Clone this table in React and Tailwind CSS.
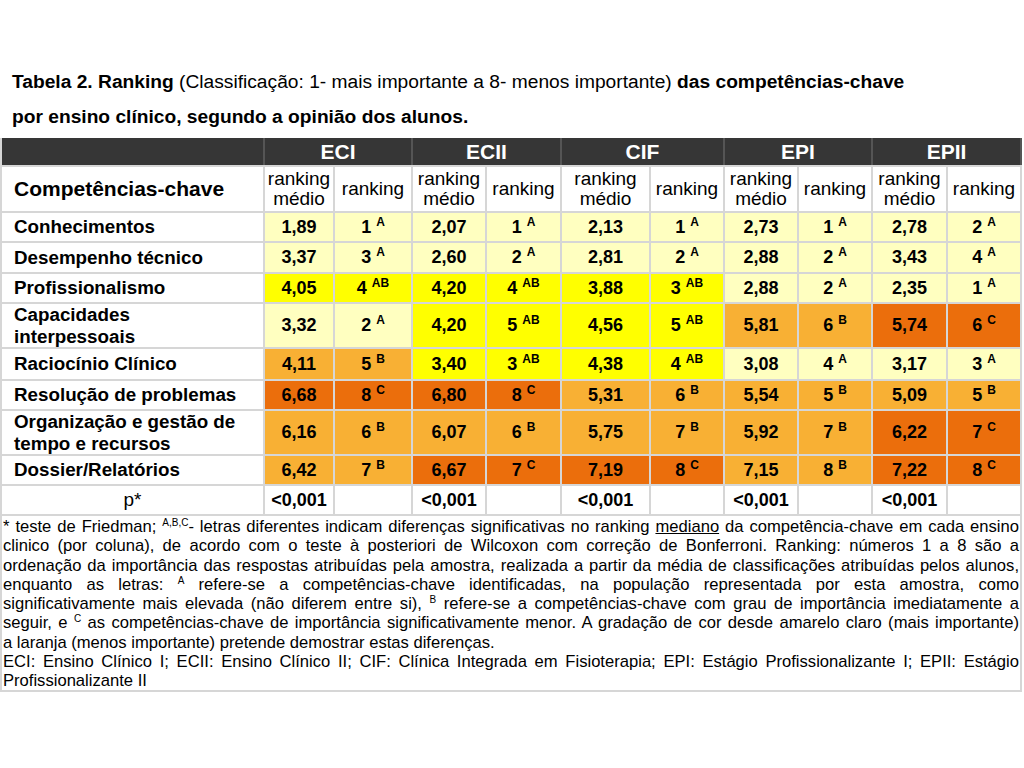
import React from 'react';

const COLORS = {
  LY: 'bg-[#ffffc0]',
  Y: 'bg-[#ffff00]',
  LO: 'bg-[#f8b034]',
  DO: 'bg-[#eb6e0c]',
};

const widths = [265, 70, 78, 74, 75, 89, 74, 74, 74, 75, 74];

const groups = ['ECI', 'ECII', 'CIF', 'EPI', 'EPII'];

// [label, height, [[media, rank, sup, color] x5]]
const rows = [
  ['Conhecimentos', 30, [
    ['1,89', '1', 'A', 'LY'], ['2,07', '1', 'A', 'LY'], ['2,13', '1', 'A', 'LY'], ['2,73', '1', 'A', 'LY'], ['2,78', '2', 'A', 'LY'],
  ]],
  ['Desempenho técnico', 31, [
    ['3,37', '3', 'A', 'LY'], ['2,60', '2', 'A', 'LY'], ['2,81', '2', 'A', 'LY'], ['2,88', '2', 'A', 'LY'], ['3,43', '4', 'A', 'LY'],
  ]],
  ['Profissionalismo', 30, [
    ['4,05', '4', 'AB', 'Y'], ['4,20', '4', 'AB', 'Y'], ['3,88', '3', 'AB', 'Y'], ['2,88', '2', 'A', 'LY'], ['2,35', '1', 'A', 'LY'],
  ]],
  [['Capacidades', 'interpessoais'], 45, [
    ['3,32', '2', 'A', 'LY'], ['4,20', '5', 'AB', 'Y'], ['4,56', '5', 'AB', 'Y'], ['5,81', '6', 'B', 'LO'], ['5,74', '6', 'C', 'DO'],
  ]],
  ['Raciocínio Clínico', 32, [
    ['4,11', '5', 'B', 'LO'], ['3,40', '3', 'AB', 'Y'], ['4,38', '4', 'AB', 'Y'], ['3,08', '4', 'A', 'LY'], ['3,17', '3', 'A', 'LY'],
  ]],
  ['Resolução de problemas', 30, [
    ['6,68', '8', 'C', 'DO'], ['6,80', '8', 'C', 'DO'], ['5,31', '6', 'B', 'LO'], ['5,54', '5', 'B', 'LO'], ['5,09', '5', 'B', 'LO'],
  ]],
  [['Organização e gestão de', 'tempo e recursos'], 45, [
    ['6,16', '6', 'B', 'LO'], ['6,07', '6', 'B', 'LO'], ['5,75', '7', 'B', 'LO'], ['5,92', '7', 'B', 'LO'], ['6,22', '7', 'C', 'DO'],
  ]],
  ['Dossier/Relatórios', 30, [
    ['6,42', '7', 'B', 'LO'], ['6,67', '7', 'C', 'DO'], ['7,19', '8', 'C', 'DO'], ['7,15', '8', 'B', 'LO'], ['7,22', '8', 'C', 'DO'],
  ]],
];

const Sup = ({ children }) => (
  <span className="text-[12px] leading-none align-[7px] ml-[5px]">{children}</span>
);

// small raised letters inside the footnote
const FnSup = ({ children }) => (
  <span className="text-[10px] leading-none align-[6px]">{children}</span>
);

const App = () => {
  return (
    <div className="w-[1024px] h-[768px] bg-white text-black font-['Liberation_Sans',Arial,sans-serif] overflow-hidden">
      <div className="pt-[64px] pl-[12px] text-[19.2px] leading-[35px] mb-[4px]">
        <div>
          <b>Tabela 2. Ranking</b> (Classificação: 1- mais importante a 8- menos importante){' '}
          <b>das competências-chave</b>
        </div>
        <div className="font-bold">por ensino clínico, segundo a opinião dos alunos.</div>
      </div>

      <div className="w-[1022px] border-l-2 border-[#d6d6d6]">
        {/* dark group header */}
        <div className="flex h-[29px] bg-[#363636] border-b-2 border-[#d6d6d6]">
          <div className="w-[263px] border-r-2 border-[#555]" />
          {groups.map((g, i) => (
            <div
              key={g}
              style={{ width: widths[1 + i * 2] + widths[2 + i * 2] }}
              className="flex items-center justify-center border-r-2 border-[#555] text-white font-bold text-[21px]"
            >
              {g}
            </div>
          ))}
        </div>

        {/* column header */}
        <div className="flex h-[46px] border-b-2 border-[#d6d6d6]">
          <div className="w-[263px] border-r-2 border-[#d6d6d6] flex items-center pl-[12px] font-bold text-[21px]">
            Competências-chave
          </div>
          {groups.map((g, i) => (
            <React.Fragment key={g}>
              <div
                style={{ width: widths[1 + i * 2] }}
                className="border-r-2 border-[#d6d6d6] flex flex-col items-center justify-center text-[19px] leading-[20px]"
              >
                <span>ranking</span>
                <span>médio</span>
              </div>
              <div
                style={{ width: widths[2 + i * 2] }}
                className="border-r-2 border-[#d6d6d6] flex items-center justify-center text-[19px]"
              >
                ranking
              </div>
            </React.Fragment>
          ))}
        </div>

        {rows.map(([label, h, cells]) => (
          <div key={String(label)} style={{ height: h }} className="flex border-b-2 border-[#d6d6d6]">
            <div className="w-[263px] border-r-2 border-[#d6d6d6] flex flex-col justify-center pl-[12px] font-bold text-[18.8px] leading-[22px]">
              {Array.isArray(label) ? label.map((l) => <span key={l}>{l}</span>) : label}
            </div>
            {cells.map(([m, r, s, c], i) => (
              <React.Fragment key={i}>
                <div
                  style={{ width: widths[1 + i * 2] }}
                  className={`${COLORS[c]} border-r-2 border-[#d6d6d6] flex items-center justify-center font-bold text-[18px]`}
                >
                  {m}
                </div>
                <div
                  style={{ width: widths[2 + i * 2] }}
                  className={`${COLORS[c]} border-r-2 border-[#d6d6d6] flex items-center justify-center font-bold text-[18px]`}
                >
                  <span>
                    {r}
                    <Sup>{s}</Sup>
                  </span>
                </div>
              </React.Fragment>
            ))}
          </div>
        ))}

        {/* p-value row */}
        <div className="flex h-[30px] border-b-2 border-[#d6d6d6]">
          <div className="w-[263px] border-r-2 border-[#d6d6d6] flex items-center justify-center text-[19px]">
            p*
          </div>
          {groups.map((g, i) => (
            <React.Fragment key={g}>
              <div
                style={{ width: widths[1 + i * 2] }}
                className="border-r-2 border-[#d6d6d6] flex items-center justify-center font-bold text-[18px]"
              >
                &lt;0,001
              </div>
              <div style={{ width: widths[2 + i * 2] }} className="border-r-2 border-[#d6d6d6]" />
            </React.Fragment>
          ))}
        </div>

        {/* footnote */}
        <div className="h-[176px] border-r-2 border-b-2 border-[#d6d6d6] px-[1px] pt-[1px] text-[16.6px] leading-[19.3px]">
          <div className="text-justify [text-align-last:justify]">
            * teste de Friedman; <FnSup>A,B,C</FnSup>- letras diferentes indicam diferenças significativas no ranking{' '}
            <span className="underline">mediano</span> da competência-chave em cada ensino
          </div>
          <div className="text-justify [text-align-last:justify]">
            clinico (por coluna), de acordo com o teste à posteriori de Wilcoxon com correção de Bonferroni. Ranking: números 1 a 8 são a
          </div>
          <div className="text-justify [text-align-last:justify]">
            ordenação da importância das respostas atribuídas pela amostra, realizada a partir da média de classificações atribuídas pelos alunos,
          </div>
          <div className="text-justify [text-align-last:justify]">
            enquanto as letras: <FnSup>A</FnSup> refere-se a competências-chave identificadas, na população representada por esta amostra, como
          </div>
          <div className="text-justify [text-align-last:justify]">
            significativamente mais elevada (não diferem entre si), <FnSup>B</FnSup> refere-se a competências-chave com grau de importância imediatamente a
          </div>
          <div className="text-justify [text-align-last:justify]">
            seguir, e <FnSup>C</FnSup> as competências-chave de importância significativamente menor. A gradação de cor desde amarelo claro (mais importante)
          </div>
          <div>a laranja (menos importante) pretende demostrar estas diferenças.</div>
          <div className="text-justify [text-align-last:justify]">
            ECI: Ensino Clínico I; ECII: Ensino Clínico II; CIF: Clínica Integrada em Fisioterapia; EPI: Estágio Profissionalizante I; EPII: Estágio
          </div>
          <div>Profissionalizante II</div>
        </div>
      </div>
    </div>
  );
};

export default App;
